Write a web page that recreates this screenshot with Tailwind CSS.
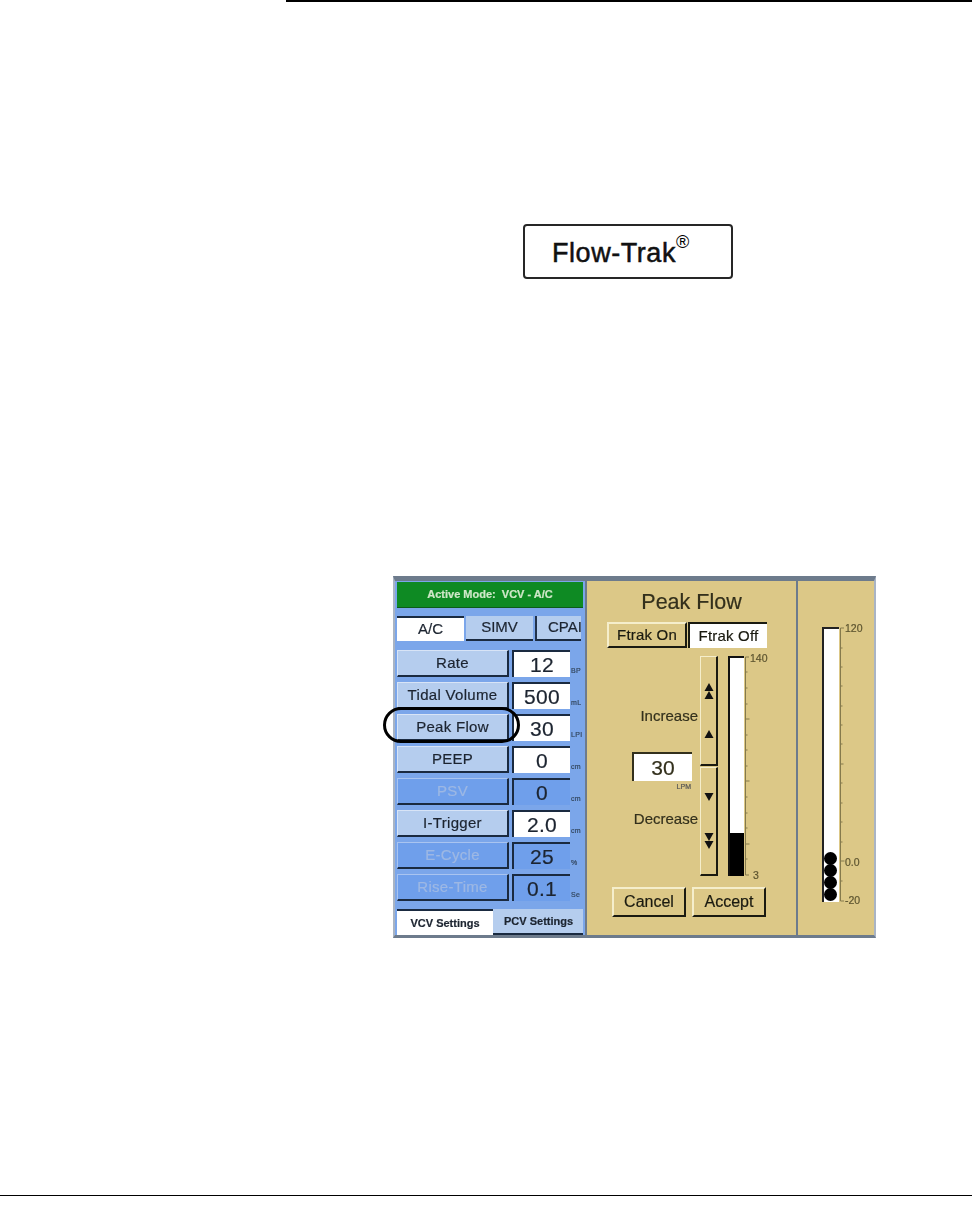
<!DOCTYPE html>
<html lang="en">
<head>
  <meta charset="UTF-8" />
  <title>Flow-Trak</title>
  <script src="https://cdn.jsdelivr.net/npm/@tailwindcss/browser@4"></script>
</head>
<body class="bg-white text-black font-['Liberation_Sans',Arial,sans-serif]">
  <div class="h-[1224px] overflow-hidden">
    <div class="ml-[286px] h-[2px] bg-black"></div>

    <!-- key label -->
    <div class="ml-[523px] mt-[222px] w-[210px] h-[55px] border-2 border-l-[2.5px] border-black/85 rounded-[4px] pl-[27px] pt-[11px] flex items-start">
      <span class="text-[27px] leading-[32px] tracking-[0.55px] text-[#111] [-webkit-text-stroke:0.5px_#111]">Flow-Trak</span><span class="text-[18px] leading-[18px] mt-[-4px] ml-[0px]">®</span>
    </div>

    <!-- ventilator screen -->
    <div class="relative ml-[393px] mt-[297px] w-[483px] h-[362px] flex bg-[#dcc887] border-[2px] border-[#a9b4c4] border-t-[5px] border-t-[#6d7b8c] border-b-[3px] border-b-[#6d7b8c] blur-[0.35px] [-webkit-text-stroke:0.2px]">

      <!-- settings column -->
      <div class="w-[190px] shrink-0 bg-[#7ba6ea] pl-[2px] pt-[1px] flex flex-col">
        <div class="h-[27px] mr-[2px] bg-[#0e8a23] border-b border-[#0b5c18] flex items-center justify-center text-[11px] font-bold text-[#cfe8c8]">Active Mode:&nbsp; VCV - A/C</div>
        <div class="flex mt-[8px] mr-[3px] h-[26px] text-[15px] text-[#1c2430] gap-[2px]">
          <div class="w-[67px] bg-white border-t-2 border-t-[#1a2a40] flex items-center justify-center">A/C</div>
          <div class="w-[67px] bg-[#b5cdee] border-b-2 border-b-[#1a2a40] flex items-center justify-center">SIMV</div>
          <div class="w-[46px] bg-[#b5cdee] border-b-2 border-b-[#1a2a40] border-l-2 border-l-[#22324a] pl-[11px] flex items-center">CPAI</div>
        </div>

        <div class="mt-[9px] flex flex-col gap-[5px] text-[15px] tracking-[0.3px] text-[#1c2430]">
          <div class="flex h-[27px]">
            <div class="w-[112px] bg-[#b5cdee] border-r-2 border-b-2 border-[#1a2a40] border-t border-l border-t-[#d8e4f6] border-l-[#d8e4f6] flex items-center justify-center">Rate</div>
            <div class="ml-[3px] w-[58px] bg-white border-t-2 border-l-2 border-[#1a2a40] flex items-center justify-center text-[21px]">12</div>
            <div class="ml-[1px] w-[14px] text-[7px] self-end text-[#33475f] leading-[12px]">BP</div>
          </div>
          <div class="flex h-[27px]">
            <div class="w-[112px] bg-[#b5cdee] border-r-2 border-b-2 border-[#1a2a40] border-t border-l border-t-[#d8e4f6] border-l-[#d8e4f6] flex items-center justify-center">Tidal Volume</div>
            <div class="ml-[3px] w-[58px] bg-white border-t-2 border-l-2 border-[#1a2a40] flex items-center justify-center text-[21px]">500</div>
            <div class="ml-[1px] w-[14px] text-[7px] self-end text-[#33475f] leading-[12px]">mL</div>
          </div>
          <div class="flex h-[27px]">
            <div class="w-[112px] bg-[#b5cdee] border-r-2 border-b-2 border-[#1a2a40] border-t border-l border-t-[#d8e4f6] border-l-[#d8e4f6] flex items-center justify-center">Peak Flow</div>
            <div class="ml-[3px] w-[58px] bg-white border-t-2 border-l-2 border-[#1a2a40] flex items-center justify-center text-[21px]">30</div>
            <div class="ml-[1px] w-[14px] text-[7px] self-end text-[#33475f] leading-[12px]">LPI</div>
          </div>
          <div class="flex h-[27px]">
            <div class="w-[112px] bg-[#b5cdee] border-r-2 border-b-2 border-[#1a2a40] border-t border-l border-t-[#d8e4f6] border-l-[#d8e4f6] flex items-center justify-center">PEEP</div>
            <div class="ml-[3px] w-[58px] bg-white border-t-2 border-l-2 border-[#1a2a40] flex items-center justify-center text-[21px]">0</div>
            <div class="ml-[1px] w-[14px] text-[7px] self-end text-[#33475f] leading-[12px]">cm</div>
          </div>
          <div class="flex h-[27px]">
            <div class="w-[112px] bg-[#6f9feb] border-r-2 border-b-2 border-[#1a2a40] border-t border-l border-t-[#a9c4f0] border-l-[#a9c4f0] flex items-center justify-center text-[#9db8e4]">PSV</div>
            <div class="ml-[3px] w-[58px] bg-[#6f9feb] border-t-2 border-l-2 border-[#1a2a40] flex items-center justify-center text-[21px]">0</div>
            <div class="ml-[1px] w-[14px] text-[7px] self-end text-[#33475f] leading-[12px]">cm</div>
          </div>
          <div class="flex h-[27px]">
            <div class="w-[112px] bg-[#b5cdee] border-r-2 border-b-2 border-[#1a2a40] border-t border-l border-t-[#d8e4f6] border-l-[#d8e4f6] flex items-center justify-center">I-Trigger</div>
            <div class="ml-[3px] w-[58px] bg-white border-t-2 border-l-2 border-[#1a2a40] flex items-center justify-center text-[21px]">2.0</div>
            <div class="ml-[1px] w-[14px] text-[7px] self-end text-[#33475f] leading-[12px]">cm</div>
          </div>
          <div class="flex h-[27px]">
            <div class="w-[112px] bg-[#6f9feb] border-r-2 border-b-2 border-[#1a2a40] border-t border-l border-t-[#a9c4f0] border-l-[#a9c4f0] flex items-center justify-center text-[#9db8e4]">E-Cycle</div>
            <div class="ml-[3px] w-[58px] bg-[#6f9feb] border-t-2 border-l-2 border-[#1a2a40] flex items-center justify-center text-[21px]">25</div>
            <div class="ml-[1px] w-[14px] text-[7px] self-end text-[#33475f] leading-[12px]">%</div>
          </div>
          <div class="flex h-[27px]">
            <div class="w-[112px] bg-[#6f9feb] border-r-2 border-b-2 border-[#1a2a40] border-t border-l border-t-[#a9c4f0] border-l-[#a9c4f0] flex items-center justify-center text-[#9db8e4]">Rise-Time</div>
            <div class="ml-[3px] w-[58px] bg-[#6f9feb] border-t-2 border-l-2 border-[#1a2a40] flex items-center justify-center text-[21px]">0.1</div>
            <div class="ml-[1px] w-[14px] text-[7px] self-end text-[#33475f] leading-[12px]">Se</div>
          </div>
        </div>

        <div class="flex mt-[8px] h-[27px] text-[11px] font-bold text-[#1c2430]">
          <div class="w-[96px] bg-white border-t-2 border-t-[#1a2a40] flex items-center justify-center">VCV Settings</div>
          <div class="w-[90px] bg-[#b5cdee] border-b-2 border-b-[#1a2a40] pl-[11px] flex items-center">PCV Settings</div>
        </div>
      </div>

      <!-- peak flow column -->
      <div class="w-[211px] shrink-0 border-l-2 border-[#6d7b8c] flex flex-col text-[#33301c]">
        <div class="h-[35px] pt-[8px] text-center text-[21.5px] leading-[26px]">Peak Flow</div>
        <div class="flex ml-[20px] mt-[6px] h-[26px] text-[15px] tracking-[0.2px]">
          <div class="w-[80px] bg-[#dcc887] border-2 border-t-[#f5eecb] border-l-[#f5eecb] border-r-[#1a1a10] border-b-[#1a1a10] flex items-center justify-center text-[#1a1a10]">Ftrak On</div>
          <div class="ml-[1px] w-[79px] bg-white border-t-2 border-l-2 border-[#1a1a10] flex items-center justify-center text-[#1a1a10]">Ftrak Off</div>
        </div>
        <div class="flex mt-[8px] h-[220px]">
          <div class="w-[111px] flex flex-col items-end text-[15px]">
            <div class="mt-[51px] leading-[18px]">Increase</div>
            <div class="mt-[27px] mr-[6px] w-[60px] h-[29px] bg-white border-t-2 border-l-2 border-[#33301c] flex items-center justify-center text-[21px]">30</div>
            <div class="mr-[6px] w-[60px] pr-[1px] text-right text-[7px] leading-[12px] text-[#555]">LPM</div>
            <div class="mt-[17px] leading-[18px]">Decrease</div>
          </div>
          <div class="ml-[2px] w-[18px] flex flex-col gap-[1px]">
            <div class="h-[110px] border-r-2 border-b-2 border-[#1a1a10] border-t border-l border-t-[#f5eecb] border-l-[#f5eecb] flex flex-col items-center">
              <svg class="mt-[26px]" width="10" height="16" viewBox="0 0 10 16"><path d="M5 0l4.5 8H.5zM5 8l4.5 8H.5z" fill="#111"/></svg>
              <svg class="mt-[31px]" width="10" height="8" viewBox="0 0 10 8"><path d="M5 0l4.5 8H.5z" fill="#111"/></svg>
            </div>
            <div class="h-[109px] border-r-2 border-b-2 border-[#1a1a10] border-t border-l border-t-[#f5eecb] border-l-[#f5eecb] flex flex-col items-center">
              <svg class="mt-[25px]" width="10" height="8" viewBox="0 0 10 8"><path d="M.5 0h9L5 8z" fill="#111"/></svg>
              <svg class="mt-[32px]" width="10" height="16" viewBox="0 0 10 16"><path d="M.5 0h9L5 8zM.5 8h9L5 16z" fill="#111"/></svg>
            </div>
          </div>
          <div class="relative ml-[10px] w-[16px] flex flex-col border-t-2 border-l-2 border-[#111]">
            <div class="flex-1 bg-white"></div>
            <div class="h-[43px] bg-black"></div>
            <svg class="absolute left-[14px] top-[-2px]" width="6" height="220" viewBox="0 0 6 220"><path d="M1.5 1V219M1.5 1H5M1.5 16h2M1.5 32h2M1.5 48h2M1.5 63h4M1.5 79h2M1.5 94h2M1.5 110h2M1.5 125h4M1.5 141h2M1.5 157h2M1.5 172h2M1.5 188h4M1.5 203h2M1.5 219H5" stroke="#857a4c" fill="none"/></svg>
            <span class="absolute left-[20px] top-[-6px] text-[10.5px] leading-[12px] text-[#5d5530]">140</span>
            <span class="absolute left-[23px] bottom-[-5px] text-[10.5px] leading-[12px] text-[#5d5530]">3</span>
          </div>
        </div>
        <div class="flex ml-[25px] mt-[11px] gap-[6px] h-[30px] text-[16px] text-[#1a1a10]">
          <div class="w-[74px] border-2 border-t-[#f5eecb] border-l-[#f5eecb] border-r-[#1a1a10] border-b-[#1a1a10] flex items-center justify-center">Cancel</div>
          <div class="w-[74px] border-2 border-t-[#f5eecb] border-l-[#f5eecb] border-r-[#1a1a10] border-b-[#1a1a10] flex items-center justify-center">Accept</div>
        </div>
      </div>

      <!-- pressure column -->
      <div class="flex-1 border-l-2 border-[#6d7b8c] pt-[46px] pl-[24px]">
        <div class="relative w-[17px] h-[275px] bg-white border-t-2 border-l-2 border-[#222] flex flex-col justify-end items-start pb-[1px]">
          <div class="w-[13px] h-[13px] rounded-full bg-black"></div>
          <div class="w-[13px] h-[13px] rounded-full bg-black -mt-[1px]"></div>
          <div class="w-[13px] h-[13px] rounded-full bg-black -mt-[1px]"></div>
          <div class="w-[13px] h-[13px] rounded-full bg-black -mt-[1px]"></div>
          <svg class="absolute left-[15px] top-[-2px]" width="6" height="275" viewBox="0 0 6 275"><path d="M1.5 1V274M1.5 1H5M1.5 21h2M1.5 40h2M1.5 59h2M1.5 79h2M1.5 98h2M1.5 117h2M1.5 137h3M1.5 156h2M1.5 176h2M1.5 195h2M1.5 215h2M1.5 234h4M1.5 254h2M1.5 274H5" stroke="#857a4c" fill="none"/></svg>
          <span class="absolute left-[21px] top-[-7px] text-[10.5px] leading-[12px] text-[#5d5530]">120</span>
          <span class="absolute left-[21px] top-[227px] text-[10.5px] leading-[12px] text-[#5d5530]">0.0</span>
          <span class="absolute left-[21px] top-[265px] text-[10.5px] leading-[12px] text-[#5d5530]">-20</span>
        </div>
      </div>

      <!-- highlight oval -->
      <div class="absolute left-[-12px] top-[126px] w-[137px] h-[36px] rounded-[18px] border-[3px] border-black"></div>
    </div>

    <div class="mt-[257px] h-[1px] bg-black"></div>
  </div>
</body>
</html>
